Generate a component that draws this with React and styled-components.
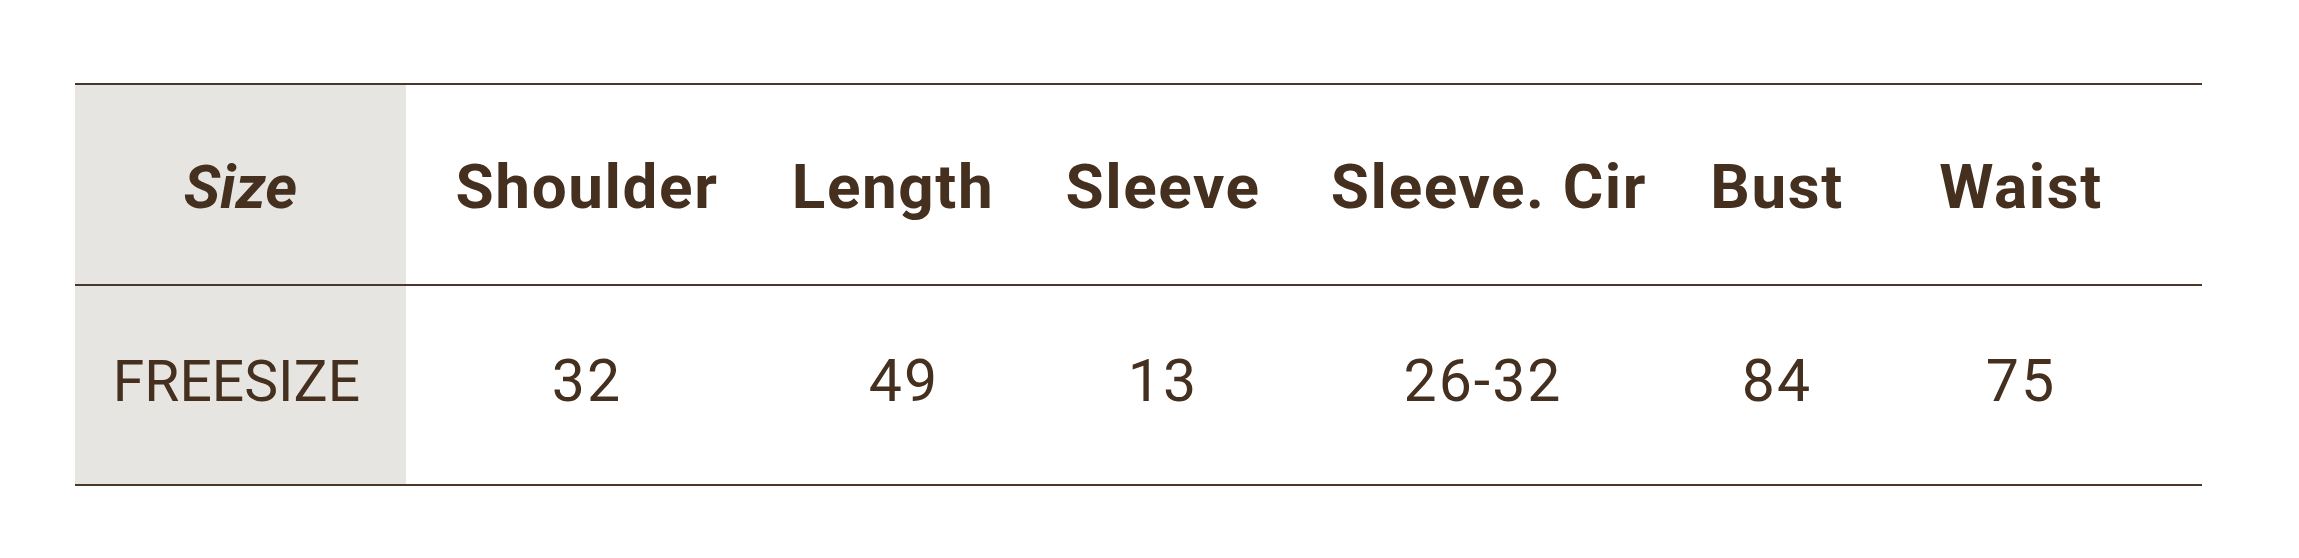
import React from "react";
import styled, { createGlobalStyle } from "styled-components";

const GlobalStyle = createGlobalStyle`
  html, body {
    margin: 0;
    padding: 0;
    background: #ffffff;
  }
`;

const columns = ["Shoulder", "Length", "Sleeve", "Sleeve. Cir", "Bust", "Waist"];
// nudge: small horizontal offset of the value under its heading
const values = [
  { v: "32", nudge: 0 },
  { v: "49", nudge: 22 },
  { v: "13", nudge: 0 },
  { v: "26-32", nudge: -12 },
  { v: "84", nudge: 0 },
  { v: "75", nudge: 0 },
];

const Page = styled.div`
  width: 2299px;
  height: 558px;
  padding: 83px 97px 0 75px;
  box-sizing: border-box;
  background: #fff;
`;

const Table = styled.div`
  border-top: 2px solid #4a3729;
  color: #45301f;
`;

const Row = styled.div`
  display: grid;
  grid-template-columns: 331px 362px 250px 290px 362px 214px 274px;
  height: ${(p) => p.$height}px;
  border-bottom: 2px solid #4a3729;
`;

const SizeCell = styled.div`
  background: #e7e5e1;
  display: flex;
  align-items: center;
  justify-content: center;
  padding: ${(p) => p.$pad};
`;

const Cell = styled.div`
  display: flex;
  align-items: center;
  justify-content: center;
  padding-top: ${(p) => p.$shift}px;
  padding-bottom: ${(p) => (p.$shift < 0 ? -p.$shift : 0)}px;
  padding-left: ${(p) => (p.$nudge > 0 ? p.$nudge : 0)}px;
  padding-right: ${(p) => (p.$nudge < 0 ? -p.$nudge : 0)}px;
  white-space: nowrap;
`;

const SizeLabel = styled.span`
  font-family: Roboto, "Liberation Sans", sans-serif;
  font-style: italic;
  font-weight: 700;
  font-size: 61px;
`;

const HeadLabel = styled.span`
  font-family: Roboto, "Liberation Sans", sans-serif;
  font-weight: 700;
  font-size: 62px;
  letter-spacing: 1.6px;
`;

const BodyLabel = styled.span`
  font-family: Roboto, "Liberation Sans", sans-serif;
  font-weight: 400;
  font-size: 57px;
`;

const NumberLabel = styled.span`
  font-family: Roboto, "Liberation Sans", sans-serif;
  font-weight: 400;
  font-size: 59px;
  letter-spacing: 2px;
`;

export default function App() {
  return (
    <>
      <GlobalStyle />
      <Page>
        <Table>
          <Row $height={199}>
            <SizeCell $pad="4px 0 0 0">
              <SizeLabel>Size</SizeLabel>
            </SizeCell>
            {columns.map((c) => (
              <Cell key={c} $shift={4} $nudge={0}>
                <HeadLabel>{c}</HeadLabel>
              </Cell>
            ))}
          </Row>
          <Row $height={198}>
            <SizeCell $pad="0 8px 8px 0">
              <BodyLabel>FREESIZE</BodyLabel>
            </SizeCell>
            {values.map((d, i) => (
              <Cell key={i} $shift={-9} $nudge={d.nudge}>
                <NumberLabel>{d.v}</NumberLabel>
              </Cell>
            ))}
          </Row>
        </Table>
      </Page>
    </>
  );
}
